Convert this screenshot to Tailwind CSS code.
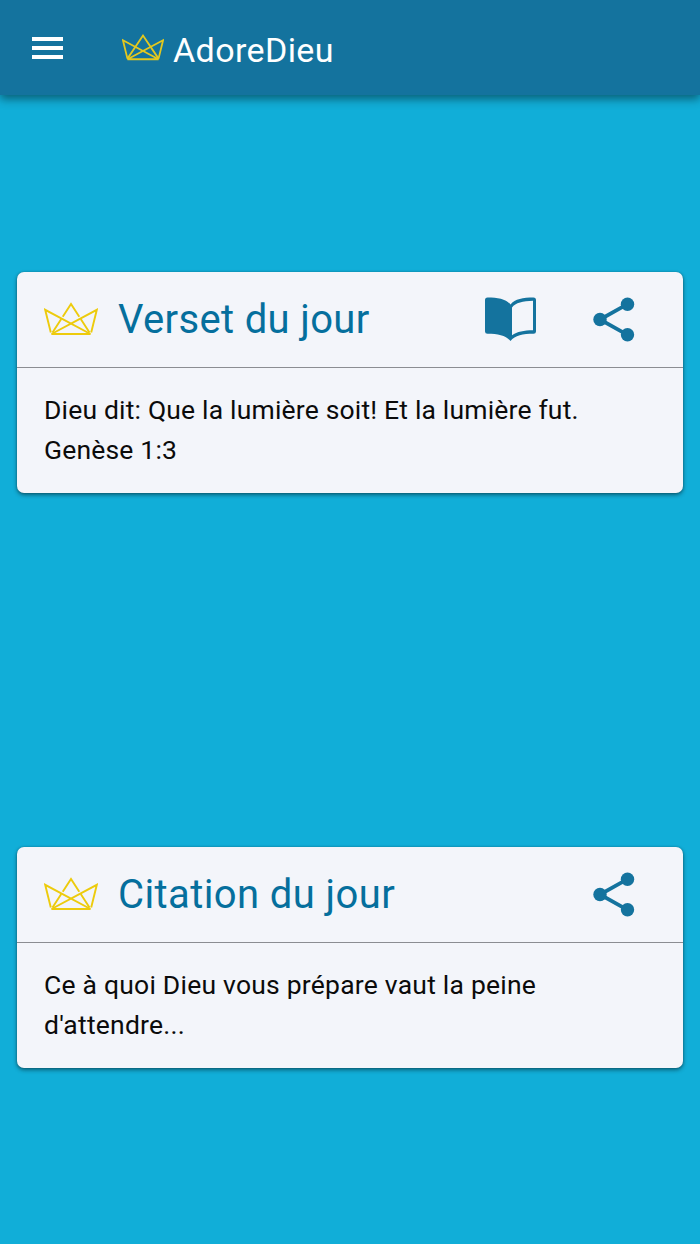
<!DOCTYPE html>
<html lang="fr">
<head>
    <meta charset="UTF-8">
    <meta name="viewport" content="width=device-width, initial-scale=1.0">
    <title>AdoreDieu</title>
    <script src="https://cdn.jsdelivr.net/npm/@tailwindcss/browser@4"></script>
</head>
<body class="bg-[#11aed8] font-['Roboto',sans-serif] h-screen flex flex-col overflow-hidden">

    <!-- Header -->
    <header class="h-[95px] shrink-0 bg-[#14739e] flex items-center pl-8 shadow-[0_4px_9px_rgba(0,0,0,0.45)]">
        <button aria-label="Menu" class="flex flex-col gap-[5px] w-[31px]">
            <span class="block h-[4px] bg-white"></span>
            <span class="block h-[4px] bg-white"></span>
            <span class="block h-[4px] bg-white"></span>
        </button>
        <svg class="w-[42px] h-[27px] ml-[59px]" viewBox="0 0 54 34" fill="none" stroke="#e3c81e" stroke-width="2.3" preserveAspectRatio="none">
            <path d="M7 31L27 2L47 31"/>
            <path d="M7 31L1.2 7.8L47 31.8H7L52.8 7.8L47 31"/>
        </svg>
        <h1 class="ml-[9px] pt-[4px] text-[34px] leading-10 text-white tracking-[0.4px] whitespace-nowrap">AdoreDieu</h1>
    </header>

    <main class="flex-1 grid grid-rows-2 items-center px-[17px]">
        <!-- Verset du jour -->
        <section class="bg-[#f3f5fa] rounded-[7px] h-[221px] shadow-[0_2px_4px_rgba(0,0,0,0.45),0_0_2px_rgba(0,0,0,0.25)]">
            <div class="h-[96px] flex items-center pl-[27px] pr-[48px] border-b-[1.5px] border-[#8b8d92]">
                <svg class="w-[54px] h-[34px] shrink-0" viewBox="0 0 54 34" fill="none" stroke="#edcb0c" stroke-width="1.9">
                    <path d="M8.5 30.5L27 2L45.5 30.5"/>
                    <path d="M14 26.5L40 13.9M40 26.5L14 13.9" stroke="#f3f5fa" stroke-width="2.8"/>
                    <path d="M6.8 30.5L1.2 7.8L46.5 32H7.5L52.8 7.8L47.2 30.5"/>
                </svg>
                <h2 class="ml-[20px] pt-[2px] flex-1 text-[40px] leading-[48px] text-[#056f9d] tracking-[0.35px] whitespace-nowrap">Verset du jour</h2>
                <button aria-label="Lire" class="mr-[57px]">
                    <svg class="w-[51px] h-[44px]" viewBox="0 0 51 44">
                        <path fill="#14739e" fill-rule="evenodd" d="M2.5 0.5C13 0.5 21 2 25.5 7.5C30 2 38 0.5 48.5 0.5Q51 0.5 51 3V34.5Q51 36.8 48.5 36.8C38 36.8 30 38.5 25.5 44C21 38.5 13 36.8 2.5 36.8Q0 36.8 0 34.5V3Q0 0.5 2.5 0.5ZM27 10.5V38.3C32 34.5 39 33.4 48 33.2V3.7C38 4 30.5 5.5 27 10.5Z"/>
                    </svg>
                </button>
                <button aria-label="Partager">
                    <svg class="w-[42px] h-[45px]" viewBox="0 0 42 45" fill="#14739e">
                        <path d="M34.5 7.2L7 22.5L34.5 37.8" fill="none" stroke="#14739e" stroke-width="3.8"/>
                        <circle cx="7" cy="22.5" r="6.7"/>
                        <circle cx="34.5" cy="7.2" r="6.7"/>
                        <circle cx="34.5" cy="37.8" r="6.7"/>
                    </svg>
                </button>
            </div>
            <p class="px-[27px] pt-[22px] text-[26.5px] leading-[40.5px] text-[#0b0b0b] tracking-[0.18px]">Dieu dit: Que la lumière soit! Et la lumière fut.<br>Genèse 1:3</p>
        </section>

        <!-- Citation du jour -->
        <section class="mt-px bg-[#f3f5fa] rounded-[7px] h-[221px] shadow-[0_2px_4px_rgba(0,0,0,0.45),0_0_2px_rgba(0,0,0,0.25)]">
            <div class="h-[96px] flex items-center pl-[27px] pr-[48px] border-b-[1.5px] border-[#8b8d92]">
                <svg class="w-[54px] h-[34px] shrink-0" viewBox="0 0 54 34" fill="none" stroke="#edcb0c" stroke-width="1.9">
                    <path d="M8.5 30.5L27 2L45.5 30.5"/>
                    <path d="M14 26.5L40 13.9M40 26.5L14 13.9" stroke="#f3f5fa" stroke-width="2.8"/>
                    <path d="M6.8 30.5L1.2 7.8L46.5 32H7.5L52.8 7.8L47.2 30.5"/>
                </svg>
                <h2 class="ml-[20px] pt-px flex-1 text-[40px] leading-[48px] text-[#056f9d] tracking-[0.4px] whitespace-nowrap">Citation du jour</h2>
                <button aria-label="Partager">
                    <svg class="w-[42px] h-[45px]" viewBox="0 0 42 45" fill="#14739e">
                        <path d="M34.5 7.2L7 22.5L34.5 37.8" fill="none" stroke="#14739e" stroke-width="3.8"/>
                        <circle cx="7" cy="22.5" r="6.7"/>
                        <circle cx="34.5" cy="7.2" r="6.7"/>
                        <circle cx="34.5" cy="37.8" r="6.7"/>
                    </svg>
                </button>
            </div>
            <p class="px-[27px] pt-[22px] text-[26.5px] leading-[40.5px] text-[#0b0b0b] tracking-[0.22px]">Ce à quoi Dieu vous prépare vaut la peine<br>d'attendre...</p>
        </section>
    </main>

</body>
</html>
